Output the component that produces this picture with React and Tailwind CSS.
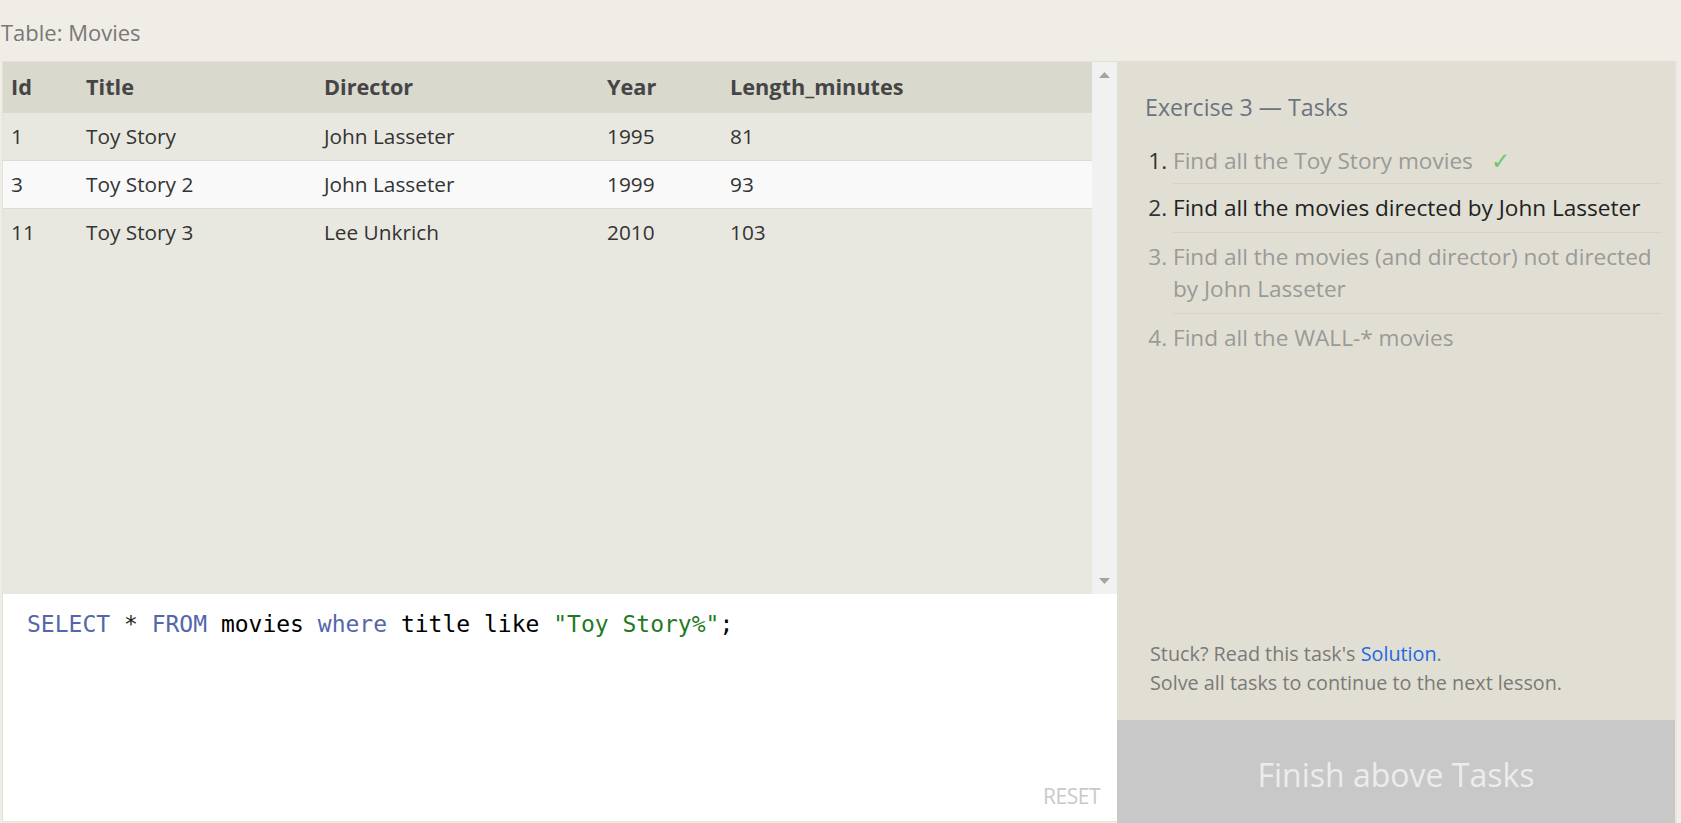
import React from "react";

const rows = [
  ["1", "Toy Story", "John Lasseter", "1995", "81"],
  ["3", "Toy Story 2", "John Lasseter", "1999", "93"],
  ["11", "Toy Story 3", "Lee Unkrich", "2010", "103"],
];

const cols = "grid grid-cols-[75px_238px_283px_123px_1fr]";

export default function App() {
  return (
    <div
      className="w-[1681px] h-[823px] bg-[#f0ede6] flex flex-col overflow-hidden"
      style={{ fontFamily: '"Open Sans", "Noto Sans", sans-serif' }}
    >
      <div className="h-[61px] shrink-0 pl-[1px] pt-[17px] text-[22px] leading-[30px] text-[#787878]">
        Table: Movies
      </div>
      <div className="flex flex-row h-[762px]">
        {/* left panel */}
        <div className="ml-[2px] w-[1115px] h-[761px] border-l border-t border-b border-[#e3e1d9] flex flex-col">
          <div className="h-[532px] shrink-0 flex flex-row bg-[#e9e8e0]">
            <div className="flex-1 flex flex-col">
              <div className={`${cols} h-[51px] bg-[#dad9ce] items-center text-[21.7px] font-bold text-[#454545]`}>
                <div className="pl-[8px]">Id</div>
                <div className="pl-[8px]">Title</div>
                <div className="pl-[8px]">Director</div>
                <div className="pl-[8px]">Year</div>
                <div className="pl-[8px]">Length_minutes</div>
              </div>
              {rows.map((r, i) => (
                <div
                  key={i}
                  className={`${cols} h-[48px] items-center text-[20.8px] text-[#333] border-b ${
                    i === 1 ? "bg-[#f9f9f9] border-[#dcdcd6]" : "bg-[#e9e8e0] border-[#dcdcd6]"
                  } ${i === 2 ? "border-transparent" : ""}`}
                >
                  {r.map((c, j) => (
                    <div key={j} className="pl-[8px]">
                      {c}
                    </div>
                  ))}
                </div>
              ))}
            </div>
            <div className="w-[25px] bg-[#f1f1f1] flex flex-col items-center justify-between py-[10px]">
              <svg width="11" height="6" viewBox="0 0 11 6">
                <path d="M0 6 L5.5 0 L11 6 Z" fill="#a3a3a3" />
              </svg>
              <svg width="11" height="6" viewBox="0 0 11 6">
                <path d="M0 0 L5.5 6 L11 0 Z" fill="#a3a3a3" />
              </svg>
            </div>
          </div>
          <div className="flex-1 bg-white flex flex-col justify-between pl-[24px] pr-[17px] pt-[15px] pb-[12px]">
            <div
              className="text-[23px] leading-[30px] whitespace-pre"
              style={{ fontFamily: '"DejaVu Sans Mono", monospace' }}
            >
              <span className="text-[#5566aa]">SELECT</span>
              <span className="text-[#222]"> * </span>
              <span className="text-[#5566aa]">FROM</span>
              <span className="text-black"> movies </span>
              <span className="text-[#5566aa]">where</span>
              <span className="text-black"> title like </span>
              <span className="text-[#1f7a1f]">"Toy Story%"</span>
              <span className="text-black">;</span>
            </div>
            <div className="self-end text-[21px] leading-[26px] tracking-[-0.5px] text-[#c9c9c9]">RESET</div>
          </div>
        </div>
        {/* right panel */}
        <div className="w-[560px] h-[762px] bg-[#e1dfd4] border-r-2 border-[#e8e6de] flex flex-col">
          <div className="pl-[28px] pt-[31px] text-[23.2px] leading-[30px] text-[#6c7380]">
            Exercise 3 — Tasks
          </div>
          <ol className="list-decimal ml-[56px] mr-[13px] mt-[15px] text-[22.6px] leading-[32px]">
            <li className="pt-[8px] pb-[6px] border-b border-[#d6d4c9] text-[#9a9a96] marker:text-[#333]">
              Find all the Toy Story movies
              <span className="ml-[18px] text-[#6cc66c]">✓</span>
            </li>
            <li className="py-[8px] border-b border-[#d6d4c9] text-[#222] marker:text-[#333]">
              Find all the movies directed by John Lasseter
            </li>
            <li className="py-[8px] border-b border-[#d6d4c9] text-[#9a9a96] marker:text-[#9a9a96]">
              Find all the movies (and director) not directed by John Lasseter
            </li>
            <li className="py-[8px] text-[#9a9a96] marker:text-[#9a9a96]">Find all the WALL-* movies</li>
          </ol>
          <div className="mt-auto pl-[33px] pb-[23px] text-[19.8px] leading-[29px] text-[#7a7a76]">
            <div>
              Stuck? Read this task's <span className="text-[#2268e0]">Solution</span>.
            </div>
            <div>Solve all tasks to continue to the next lesson.</div>
          </div>
          <div className="h-[103px] shrink-0 bg-[#c8c8c8] flex items-center justify-center pt-[6px] text-[32px] text-[#ececec]">
            Finish above Tasks
          </div>
        </div>
      </div>
    </div>
  );
}
